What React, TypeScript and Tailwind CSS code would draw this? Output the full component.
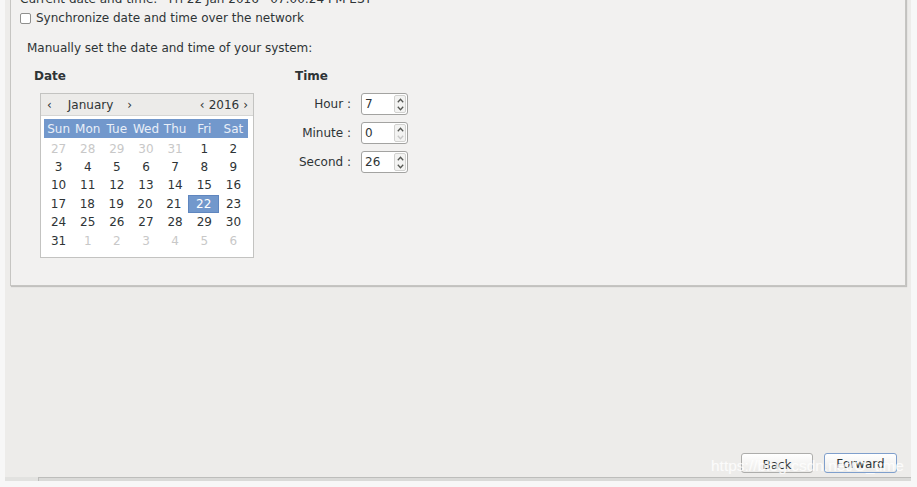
import React from "react";

const font = { fontFamily: '"DejaVu Sans", "Liberation Sans", sans-serif' };

type Day = { n: number; dim?: boolean; sel?: boolean };

const rows: Day[][] = [
  [{ n: 27, dim: true }, { n: 28, dim: true }, { n: 29, dim: true }, { n: 30, dim: true }, { n: 31, dim: true }, { n: 1 }, { n: 2 }],
  [{ n: 3 }, { n: 4 }, { n: 5 }, { n: 6 }, { n: 7 }, { n: 8 }, { n: 9 }],
  [{ n: 10 }, { n: 11 }, { n: 12 }, { n: 13 }, { n: 14 }, { n: 15 }, { n: 16 }],
  [{ n: 17 }, { n: 18 }, { n: 19 }, { n: 20 }, { n: 21 }, { n: 22, sel: true }, { n: 23 }],
  [{ n: 24 }, { n: 25 }, { n: 26 }, { n: 27 }, { n: 28 }, { n: 29 }, { n: 30 }],
  [{ n: 31 }, { n: 1, dim: true }, { n: 2, dim: true }, { n: 3, dim: true }, { n: 4, dim: true }, { n: 5, dim: true }, { n: 6, dim: true }],
];

const heads = ["Sun", "Mon", "Tue", "Wed", "Thu", "Fri", "Sat"];

function Chevron({ up, disabled }: { up?: boolean; disabled?: boolean }) {
  return (
    <svg width="7" height="5" viewBox="0 0 7 5">
      <path
        d={up ? "M0.8 4.2 L3.5 1.2 L6.2 4.2" : "M0.8 0.8 L3.5 3.8 L6.2 0.8"}
        fill="none"
        stroke={disabled ? "#c6c6c6" : "#555753"}
        strokeWidth="1.3"
      />
    </svg>
  );
}

function Spin({ label, value, downDisabled }: { label: string; value: string; downDisabled?: boolean }) {
  return (
    <div className="flex items-center h-[22px]">
      <div className="w-[56px] text-right text-[12px] text-[#2e3436] leading-[16px] whitespace-nowrap">{label}</div>
      <div className="ml-[10px] w-[47px] h-[22px] flex border border-[#a3a3a1] rounded-[3px] bg-white overflow-hidden">
        <div className="flex-1 pl-[3px] text-[12px] leading-[20px] text-[#2e3436]">{value}</div>
        <div className="w-[12px] my-[1px] mr-[1px] flex flex-col border border-[#d2d2d0] rounded-[2px] bg-[#f3f3f2]">
          <div className="flex-1 flex items-center justify-center">
            <Chevron up />
          </div>
          <div className="flex-1 flex items-center justify-center">
            <Chevron disabled={downDisabled} />
          </div>
        </div>
      </div>
    </div>
  );
}

export default function App() {
  return (
    <div className="w-[917px] h-[487px] bg-[#f7f7f7] overflow-hidden relative" style={font}>
      <div className="ml-[5px] w-[906px] h-[477px] bg-[#edecea] flex flex-col">
        {/* panel */}
        <div className="ml-[5px] -mt-[20px] w-[896px] h-[306px] border border-[#c6c5c2] bg-[#f2f1f0] shadow-[1px_1px_1px_rgba(0,0,0,0.18)] flex flex-col">
          <div className="mt-[10px] pl-[9px] h-[16px] text-[12px] leading-[16px] text-[#2e3436] whitespace-nowrap">
            Current date and time:&nbsp;&nbsp; Fri 22 Jan 2016&nbsp;&nbsp; 07:00:24 PM EST
          </div>
          <div className="mt-[3px] pl-[9px] h-[16px] flex items-center">
            <div className="w-[11px] h-[11px] border border-[#8f8f8d] rounded-[2px] bg-white" />
            <div className="ml-[5px] text-[12px] leading-[16px] text-[#2e3436] whitespace-nowrap">
              Synchronize date and time over the network
            </div>
          </div>
          <div className="mt-[14px] pl-[16px] h-[16px] text-[12px] leading-[16px] text-[#2e3436] whitespace-nowrap">
            Manually set the date and time of your system:
          </div>
          <div className="mt-[12px] pl-[23px] flex">
            {/* Date column */}
            <div className="w-[261px] flex flex-col">
              <div className="h-[16px] text-[12px] leading-[16px] font-bold text-[#2e3436]">Date</div>
              <div className="mt-[9px] ml-[6px] w-[214px] h-[165px] border border-[#c3c3c1] bg-[#ecebe9] flex flex-col">
                <div className="h-[21px] flex items-center text-[12px] text-[#2e3436] leading-[16px]">
                  <span className="ml-[6px]">‹</span>
                  <span className="ml-[16px]">January</span>
                  <span className="ml-[14px]">›</span>
                  <span className="ml-auto">‹</span>
                  <span className="ml-[4px]">2016</span>
                  <span className="ml-[4px] mr-[5px]">›</span>
                </div>
                <div className="flex-1 bg-white border-t border-[#d6d6d4] pl-[3px] pt-[3px]">
                  <div className="w-[204px] h-[19px] bg-[#7298cc] flex items-center text-[12px] text-[#e9eff8] leading-[16px]">
                    {heads.map((h) => (
                      <div key={h} className="flex-1 text-center">{h}</div>
                    ))}
                  </div>
                  <div className="mt-[1.5px] w-[204px] flex flex-col">
                    {rows.map((r, i) => (
                      <div key={i} className="h-[18.4px] flex">
                        {r.map((d, j) => (
                          <div
                            key={j}
                            className={
                              "flex-1 flex items-center justify-center text-[12px] leading-[16px] " +
                              (d.sel
                                ? "bg-[#7298cc] border border-[#5f86bf] text-white"
                                : d.dim
                                ? "text-[#c8c8c8]"
                                : "text-[#2e3436]")
                            }
                          >
                            {d.n}
                          </div>
                        ))}
                      </div>
                    ))}
                  </div>
                </div>
              </div>
            </div>
            {/* Time column */}
            <div className="flex flex-col">
              <div className="h-[16px] text-[12px] leading-[16px] font-bold text-[#2e3436]">Time</div>
              <div className="mt-[9px] flex flex-col gap-[7px]">
                <Spin label="Hour :" value="7" />
                <Spin label="Minute :" value="0" downDisabled />
                <Spin label="Second :" value="26" />
              </div>
            </div>
          </div>
        </div>
        <div className="flex-1" />
        <div className="flex justify-end gap-[11px] pr-[14px] mb-[4px]">
          <div className="w-[72px] h-[20px] pt-[3px] border border-[#adadab] rounded-[3px] bg-gradient-to-b from-white to-[#ecebe9] flex items-center justify-center text-[12px] text-[#2e3436]">
            Back
          </div>
          <div className="w-[73px] h-[20px] pt-[2px] border border-[#7f9fcc] rounded-[3px] bg-gradient-to-b from-white to-[#ecebe9] flex items-center justify-center text-[12px] text-[#2e3436]">
            Forward
          </div>
        </div>
      </div>
      <div className="ml-[5px] w-[906px] h-[4px] flex">
        <div className="w-[33px] bg-[#e2e2e0]" />
        <div className="flex-1 border-t border-l border-[#bdbdbb] bg-[#dadad8]" />
      </div>
      <div
        className="absolute left-[711px] top-[456px] text-[15.5px] leading-[20px] text-white/80 whitespace-nowrap pointer-events-none"
        style={{ fontFamily: '"Liberation Sans", Arial, sans-serif' }}
      >
        https://blog.csdn.net/O_time
      </div>
    </div>
  );
}
